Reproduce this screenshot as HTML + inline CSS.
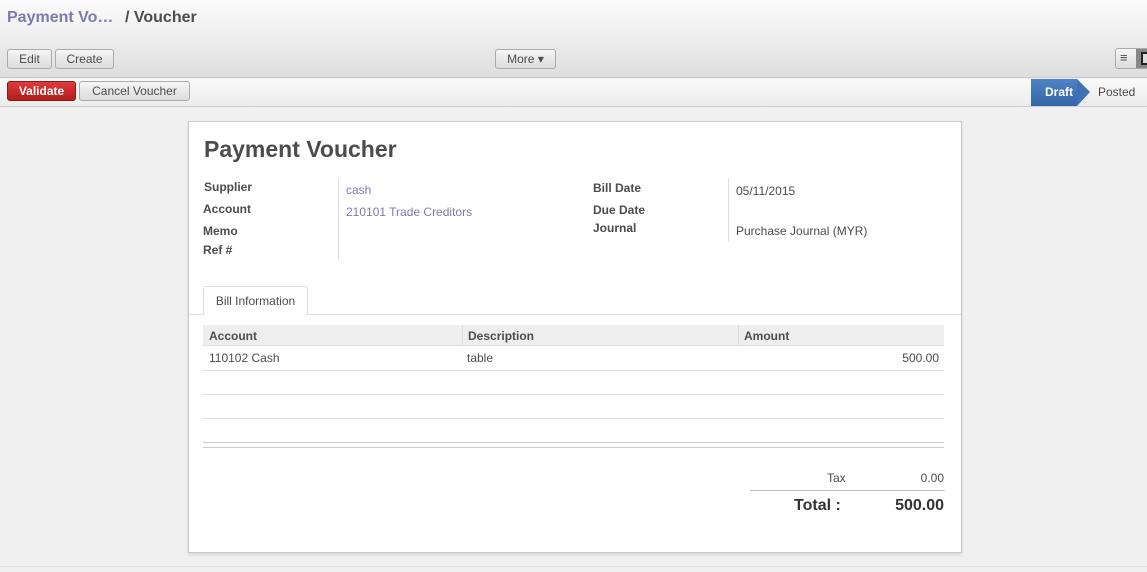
<html><head><style>
*{margin:0;padding:0;box-sizing:border-box}
body{width:1147px;height:572px;position:relative;overflow:hidden;font-family:"Liberation Sans",sans-serif;font-size:12px;color:#4c4c4c;background:#f0f0f0}
.a{position:absolute}
.btn{position:absolute;height:20px;border:1px solid #aaa;border-radius:3px;background:linear-gradient(#f6f6f6,#dcdcdc);font-size:12px;line-height:18px;text-align:center;color:#4c4c4c}
.lbl{position:absolute;font-weight:bold;font-size:12px;color:#4c4c4c}
.val{position:absolute;font-size:12px}
.hl{position:absolute;left:203px;width:741px;height:1px;background:#ddd}
</style></head><body>
<div class="a" style="left:0;top:0;width:1147px;height:78px;background:linear-gradient(#fcfcfc,#dedede);border-bottom:1px solid #c8c8c8"></div>
<div class="a" style="left:7px;top:9px;font-size:16px;font-weight:bold;color:#7c7bad">Payment Vo…</div>
<div class="a" style="left:125px;top:9px;font-size:16px;font-weight:bold;color:#4c4c4c">/ Voucher</div>
<div class="btn" style="left:7px;top:49px;width:45px">Edit</div>
<div class="btn" style="left:55px;top:49px;width:59px">Create</div>
<div class="btn" style="left:495px;top:49px;width:61px">More ▾</div>
<div class="btn" style="left:1115px;top:48px;width:40px;height:21px;line-height:18px;font-size:13px;text-align:left;padding-left:4px">≡</div>
<div class="a" style="left:1136px;top:49px;width:12px;height:19px;background:#888"></div>
<div class="a" style="left:1141px;top:52px;width:8px;height:13px;border:2px solid #222;background:#ddd"></div>
<div class="a" style="left:0;top:79px;width:1147px;height:28px;background:linear-gradient(#fafafa,#ececec);border-bottom:1px solid #d0d0d0"></div>
<div class="btn" style="left:7px;top:81px;width:69px;background:linear-gradient(#df3b3b,#b31c1c);border-color:#8b1a1a;color:#fff;font-weight:bold">Validate</div>
<div class="btn" style="left:79px;top:81px;width:111px">Cancel Voucher</div>
<div class="a" style="left:1031px;top:79px;width:46px;height:27px;background:linear-gradient(#4f84c4,#3465a4);color:#fff;font-weight:bold;line-height:26px;padding-left:14px">Draft</div>
<div class="a" style="left:1077px;top:79px;width:0;height:0;border-top:13px solid transparent;border-bottom:14px solid transparent;border-left:13px solid #3d71b4"></div>
<div class="a" style="left:1098px;top:85px;color:#4c4c4c">Posted</div>
<div class="a" style="left:188px;top:121px;width:774px;height:432px;background:#fff;border:1px solid #c8c8d0;box-shadow:0 2px 3px rgba(0,0,0,.1)"></div>
<div class="a" style="left:204px;top:136px;font-size:23px;font-weight:bold;color:#4c4c4c">Payment Voucher</div>
<div class="lbl" style="left:204px;top:180px">Supplier</div>
<div class="lbl" style="left:203px;top:202px">Account</div>
<div class="lbl" style="left:203px;top:224px">Memo</div>
<div class="lbl" style="left:203px;top:243px">Ref #</div>
<div class="a" style="left:338px;top:178px;width:1px;height:82px;background:#ddd"></div>
<div class="val" style="left:346px;top:183px;color:#7c7bad">cash</div>
<div class="val" style="left:346px;top:205px;color:#7c7bad">210101 Trade Creditors</div>
<div class="lbl" style="left:593px;top:181px">Bill Date</div>
<div class="lbl" style="left:593px;top:203px">Due Date</div>
<div class="lbl" style="left:593px;top:221px">Journal</div>
<div class="a" style="left:728px;top:178px;width:1px;height:63px;background:#ddd"></div>
<div class="val" style="left:736px;top:184px">05/11/2015</div>
<div class="val" style="left:736px;top:224px">Purchase Journal (MYR)</div>
<div class="a" style="left:189px;top:314px;width:772px;height:1px;background:#ddd"></div>
<div class="a" style="left:203px;top:286px;width:105px;height:29px;background:#fff;border:1px solid #ddd;border-bottom:none;border-radius:3px 3px 0 0;line-height:28px;text-align:center">Bill Information</div>
<div class="a" style="left:203px;top:325px;width:741px;height:21px;background:#eee;border-bottom:1px solid #ddd"></div>
<div class="a" style="left:462px;top:325px;width:1px;height:21px;background:#ddd"></div>
<div class="a" style="left:738px;top:325px;width:1px;height:21px;background:#ddd"></div>
<div class="lbl" style="left:209px;top:329px">Account</div>
<div class="lbl" style="left:468px;top:329px">Description</div>
<div class="lbl" style="left:744px;top:329px">Amount</div>
<div class="val" style="left:209px;top:351px">110102 Cash</div>
<div class="val" style="left:467px;top:351px">table</div>
<div class="val" style="left:880px;top:351px;width:59px;text-align:right">500.00</div>
<div class="hl" style="top:370px"></div>
<div class="hl" style="top:394px"></div>
<div class="hl" style="top:418px"></div>
<div class="hl" style="top:442px;background:#ccc"></div>
<div class="hl" style="top:447px;background:#ccc"></div>
<div class="val" style="left:827px;top:471px">Tax</div>
<div class="val" style="left:880px;top:471px;width:64px;text-align:right">0.00</div>
<div class="a" style="left:750px;top:490px;width:195px;height:1px;background:#bbb"></div>
<div class="a" style="left:794px;top:497px;font-size:16px;font-weight:bold;color:#333">Total :</div>
<div class="a" style="left:860px;top:497px;width:84px;text-align:right;font-size:16px;font-weight:bold;color:#333">500.00</div>
<div class="a" style="left:0;top:566px;width:1147px;height:1px;background:#ddd"></div>
</body></html>
